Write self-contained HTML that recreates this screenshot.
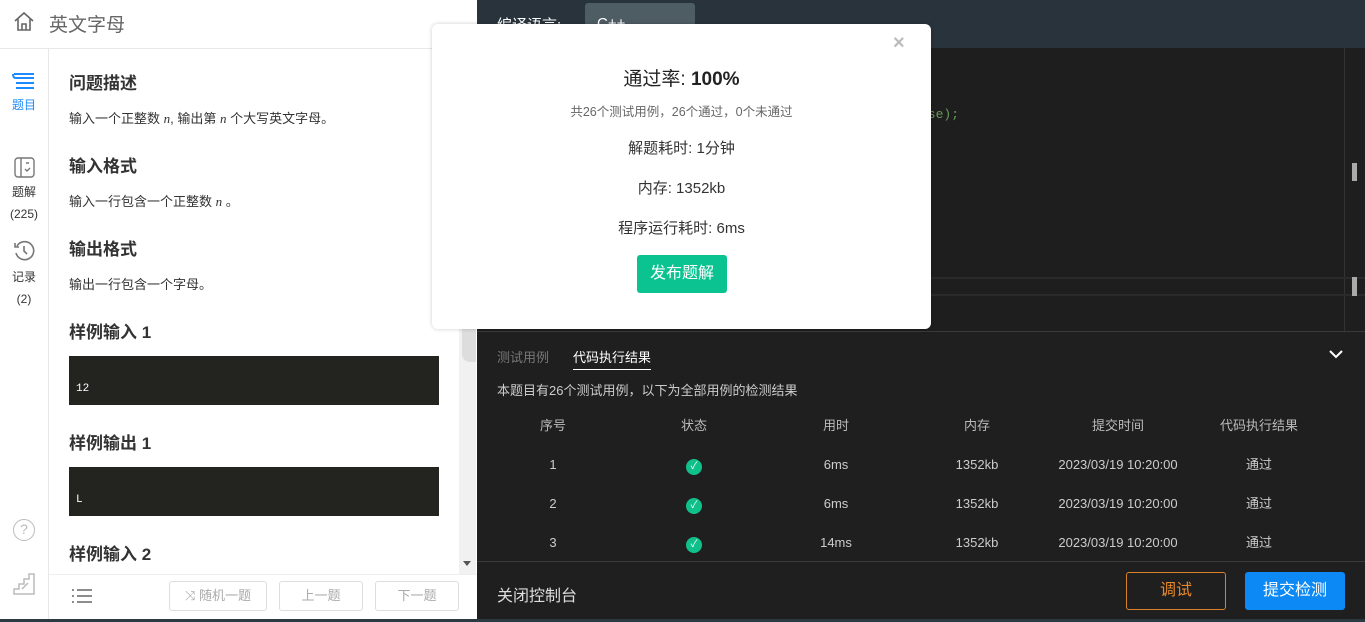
<!DOCTYPE html>
<html><head><meta charset="utf-8"><style>
*{margin:0;padding:0;box-sizing:border-box}
body{width:1365px;height:622px;overflow:hidden;position:relative;font-family:"Liberation Sans","Noto Sans CJK SC",sans-serif;background:#1f1f1f}
.abs{position:absolute}
.left{left:0;top:0;width:477px;height:622px;background:#fff}
h3{position:absolute;left:69px;font-size:17px;font-weight:bold;color:#333}
.p{position:absolute;left:69px;font-size:13px;color:#333}
.code{position:absolute;left:69px;width:370px;height:49px;background:#23231f;color:#fff;font-family:"Liberation Mono",monospace;font-size:11px;padding:27px 0 0 7px}
.btn{position:absolute;top:581px;height:30px;border:1px solid #ddd;border-radius:3px;color:#aaa;font-size:13px;text-align:center;line-height:28px}
.side{position:absolute;left:0;width:48px;text-align:center;font-size:12px;color:#333}
.th,.td{position:absolute;font-size:13px;color:#ccc;text-align:center;width:120px;height:20px;line-height:20px}
.th{top:416px;color:#bbb}
.ok{display:inline-block;width:16px;height:16px;border-radius:50%;background:#10c08a;color:#fff;font-size:10px;line-height:16px;vertical-align:middle}
.m{position:absolute;left:0;width:499px;text-align:center;color:#333}
</style></head><body>
<div class="abs left">
 <div class="abs" style="left:0;top:48px;width:477px;height:1px;background:#e8e8e8"></div>
 <svg class="abs" style="left:13px;top:10px" width="22" height="22" viewBox="0 0 22 22" fill="none" stroke="#666" stroke-width="1.6"><path d="M2 11 L11 3 L20 11 M5 9 V20 H17 V9 M9 20 V14 H13 V20"/></svg>
 <div class="abs" style="left:49px;top:10px;font-size:19px;color:#666">英文字母</div>
 <div class="abs" style="left:48px;top:49px;width:1px;height:573px;background:#e8e8e8"></div>
 <svg class="abs" style="left:12px;top:71px" width="24" height="20" viewBox="0 0 24 20" fill="none" stroke="#1a8cff" stroke-width="2"><path d="M2 3 H22 M4 7 H22 M1 3 Q1 7 4 7 M4 12 H22 M4 17 H22"/></svg>
 <div class="side" style="top:96px;color:#1a8cff">题目</div>
 <svg class="abs" style="left:14px;top:157px" width="21" height="21" viewBox="0 0 21 21" fill="none" stroke="#777" stroke-width="1.4"><rect x="1" y="1" width="19" height="19" rx="3"/><path d="M7 1 V20 M12 6 H15 M11 12 L13 14 L16 11"/></svg>
 <div class="side" style="top:183px">题解</div>
 <div class="side" style="top:207px">(225)</div>
 <svg class="abs" style="left:13px;top:240px" width="22" height="22" viewBox="0 0 22 22" fill="none" stroke="#777" stroke-width="1.6"><path d="M4 6 A9 9 0 1 1 3 13 M2 3 V7 H6 M11 6 V11 L14 14"/></svg>
 <div class="side" style="top:268px">记录</div>
 <div class="side" style="top:292px">(2)</div>
 <div class="abs" style="left:13px;top:519px;width:22px;height:22px;border:1.5px solid #bbb;border-radius:50%;color:#bbb;font-size:14px;text-align:center;line-height:19px">?</div>
 <svg class="abs" style="left:13px;top:573px" width="22" height="22" viewBox="0 0 22 22" fill="none" stroke="#bbb" stroke-width="1.5"><path d="M1 21 H21 V1 H16 V6 H11 V11 H6 V16 H1 Z M9 16 L15 10"/></svg>
 <h3 style="top:69px">问题描述</h3>
 <div class="p" style="top:108px">输入一个正整数 <i style="font-family:'Liberation Serif'">n</i>, 输出第 <i style="font-family:'Liberation Serif'">n</i> 个大写英文字母。</div>
 <h3 style="top:152px">输入格式</h3>
 <div class="p" style="top:191px">输入一行包含一个正整数 <i style="font-family:'Liberation Serif'">n</i> 。</div>
 <h3 style="top:235px">输出格式</h3>
 <div class="p" style="top:274px">输出一行包含一个字母。</div>
 <h3 style="top:318px">样例输入 1</h3>
 <div class="code" style="top:356px">12</div>
 <h3 style="top:429px">样例输出 1</h3>
 <div class="code" style="top:467px">L</div>
 <h3 style="top:540px">样例输入 2</h3>
 <div class="abs" style="left:459px;top:49px;width:17px;height:525px;background:#f1f1f1"></div>
 <div class="abs" style="left:462px;top:320px;width:14px;height:42px;background:#ddd;border-radius:0 0 0 8px"></div>
 <div class="abs" style="left:463px;top:561px;border:4px solid transparent;border-top:5px solid #555"></div>
 <div class="abs" style="left:49px;top:574px;width:428px;height:1px;background:#eee"></div>
 <svg class="abs" style="left:72px;top:588px" width="20" height="16" viewBox="0 0 20 16" stroke="#666" stroke-width="1.5"><path d="M0 2 H2 M5 2 H20 M0 8 H2 M5 8 H20 M0 14 H2 M5 14 H20"/></svg>
 <div class="btn" style="left:169px;width:98px">⤨ 随机一题</div>
 <div class="btn" style="left:279px;width:84px">上一题</div>
 <div class="btn" style="left:375px;width:84px">下一题</div>
 <div class="abs" style="left:0;top:619px;width:477px;height:3px;background:#2b3a42"></div>
</div>
<div class="abs" style="left:477px;top:0;width:888px;height:48px;background:#29333b"></div>
<div class="abs" style="left:497px;top:14px;color:#fff;font-size:15px">编译语言:</div>
<div class="abs" style="left:585px;top:3px;width:110px;height:40px;background:#4e5c64;border-radius:3px;color:#fff;font-size:15px;padding:12px 0 0 12px">C++</div>
<div class="abs" style="left:477px;top:48px;width:888px;height:283px;background:#1e1e1e"></div>
<div class="abs" style="left:920px;top:107px;color:#6a9955;font-family:'Liberation Mono',monospace;font-size:13px">lse);</div>
<div class="abs" style="left:1344px;top:48px;width:1px;height:283px;background:#333"></div>
<div class="abs" style="left:1352px;top:163px;width:5px;height:18px;background:#aaa"></div>
<div class="abs" style="left:931px;top:277px;width:434px;height:2px;background:#2a2a2a"></div>
<div class="abs" style="left:931px;top:294px;width:434px;height:2px;background:#2a2a2a"></div>
<div class="abs" style="left:1352px;top:277px;width:5px;height:19px;background:#aaa"></div>
<div class="abs" style="left:477px;top:331px;width:888px;height:1px;background:#3a3a3a"></div>
<div class="abs" style="left:497px;top:347px;color:#777;font-size:13px">测试用例</div>
<div class="abs" style="left:573px;top:347px;color:#fff;font-size:13px;padding-bottom:3px;border-bottom:1.5px solid #fff">代码执行结果</div>
<svg class="abs" style="left:1328px;top:348px" width="16" height="12" viewBox="0 0 16 12" fill="none" stroke="#fff" stroke-width="2"><path d="M2 3 L8 9 L14 3"/></svg>
<div class="abs" style="left:497px;top:380px;color:#ccc;font-size:13px">本题目有26个测试用例，以下为全部用例的检测结果</div>
<div class="th" style="left:493px">序号</div><div class="th" style="left:634px">状态</div><div class="th" style="left:776px">用时</div><div class="th" style="left:917px">内存</div><div class="th" style="left:1058px">提交时间</div><div class="th" style="left:1199px">代码执行结果</div>
<div class="td" style="left:493px;top:455px">1</div><div class="td" style="left:634px;top:456px"><span class="ok">✓</span></div><div class="td" style="left:776px;top:455px">6ms</div><div class="td" style="left:917px;top:455px">1352kb</div><div class="td" style="left:1058px;top:455px">2023/03/19 10:20:00</div><div class="td" style="left:1199px;top:455px">通过</div>
<div class="td" style="left:493px;top:494px">2</div><div class="td" style="left:634px;top:495px"><span class="ok">✓</span></div><div class="td" style="left:776px;top:494px">6ms</div><div class="td" style="left:917px;top:494px">1352kb</div><div class="td" style="left:1058px;top:494px">2023/03/19 10:20:00</div><div class="td" style="left:1199px;top:494px">通过</div>
<div class="td" style="left:493px;top:533px">3</div><div class="td" style="left:634px;top:534px"><span class="ok">✓</span></div><div class="td" style="left:776px;top:533px">14ms</div><div class="td" style="left:917px;top:533px">1352kb</div><div class="td" style="left:1058px;top:533px">2023/03/19 10:20:00</div><div class="td" style="left:1199px;top:533px">通过</div>
<div class="abs" style="left:477px;top:561px;width:888px;height:1px;background:#3a3a3a"></div>
<div class="abs" style="left:497px;top:582px;color:#ddd;font-size:16px">关闭控制台</div>
<div class="abs" style="left:1126px;top:572px;width:100px;height:38px;border:1px solid #d9822b;border-radius:3px;color:#e8882b;font-size:16px;text-align:center;line-height:36px">调试</div>
<div class="abs" style="left:1245px;top:572px;width:100px;height:38px;background:#0c89f5;border-radius:3px;color:#fff;font-size:16px;text-align:center;line-height:38px">提交检测</div>
<div class="abs" style="left:477px;top:619px;width:888px;height:3px;background:#2b3a42"></div>
<div class="abs" style="left:432px;top:24px;width:499px;height:305px;background:#fff;border-radius:6px;box-shadow:0 0 4px rgba(0,0,0,.2)">
 <div class="abs" style="left:461px;top:8px;color:#bbb;font-size:20px;font-weight:bold">×</div>
 <div class="m" style="top:40px;font-size:19px;color:#222">通过率: <b>100%</b></div>
 <div class="m" style="top:77px;font-size:12.5px;color:#666">共26个测试用例，26个通过，0个未通过</div>
 <div class="m" style="top:113px;font-size:15px">解题耗时: 1分钟</div>
 <div class="m" style="top:153px;font-size:15px">内存: 1352kb</div>
 <div class="m" style="top:193px;font-size:15px">程序运行耗时: 6ms</div>
 <div class="abs" style="left:205px;top:231px;width:90px;height:38px;background:#0bc391;border-radius:3px;color:#fff;font-size:16px;text-align:center;line-height:38px">发布题解</div>
</div>
</body></html>
